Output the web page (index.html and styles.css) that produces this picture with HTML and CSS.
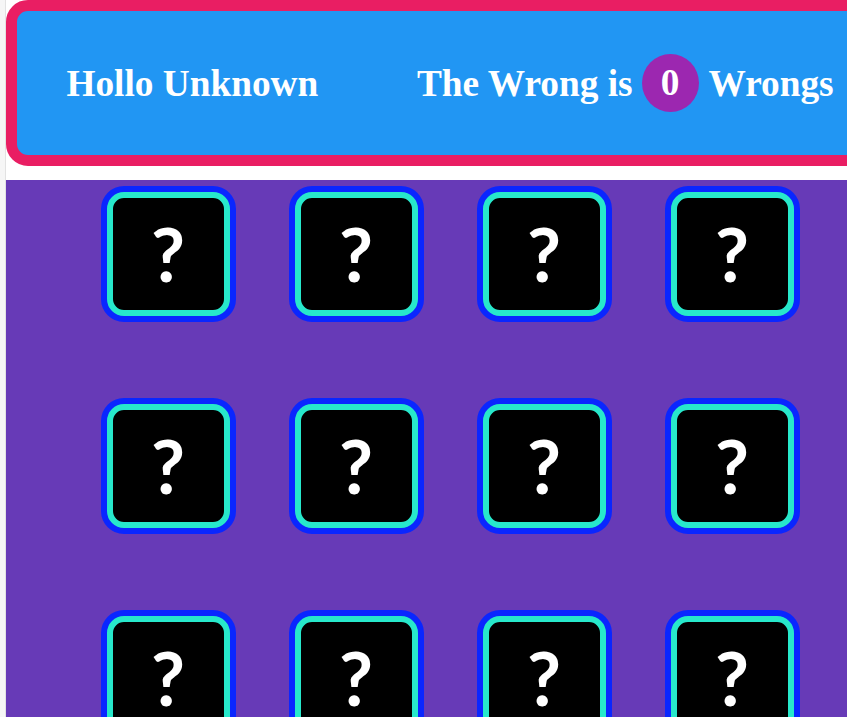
FILE: index.html
```html
<!DOCTYPE html>
<html>
<head>
<meta charset="utf-8">
<link rel="stylesheet" href="styles.css">
</head>
<body>
<div class="page">
  <header class="header">
    <span class="title">Hollo Unknown</span>
    <span class="title">The Wrong is <span class="count">0</span> Wrongs</span>
  </header>
  <main class="board">
    <div class="card"><div class="face">?</div></div>
    <div class="card"><div class="face">?</div></div>
    <div class="card"><div class="face">?</div></div>
    <div class="card"><div class="face">?</div></div>
    <div class="card"><div class="face">?</div></div>
    <div class="card"><div class="face">?</div></div>
    <div class="card"><div class="face">?</div></div>
    <div class="card"><div class="face">?</div></div>
    <div class="card"><div class="face">?</div></div>
    <div class="card"><div class="face">?</div></div>
    <div class="card"><div class="face">?</div></div>
    <div class="card"><div class="face">?</div></div>
  </main>
</div>
</body>
</html>
```

FILE: styles.css
```css
html, body {
  margin: 0;
  padding: 0;
  overflow: hidden;
  background: #f6f6f6;
  height: 100%;
}

.page {
  margin-left: 5px;
  border-left: 1px solid #e2e2e2;
  background: #ffffff;
  width: 888px;
  min-height: 100%;
}

.header {
  box-sizing: border-box;
  height: 166px;
  border: 11px solid #e91e63;
  border-radius: 22px;
  background: #2196f3;
  display: flex;
  justify-content: space-around;
  align-items: center;
  font-family: "Liberation Serif", "Times New Roman", serif;
  font-weight: bold;
  font-size: 37.3px;
  color: #ffffff;
}

.title {
  white-space: nowrap;
  display: flex;
  align-items: center;
}

.count {
  display: inline-block;
  width: 57px;
  height: 58px;
  line-height: 58px;
  border-radius: 50%;
  background: #9c27b0;
  text-align: center;
  margin: 0 10px 0 9px;
}

.board {
  margin-top: 14px;
  background: #673ab7;
  padding: 6px 0 80px;
  display: grid;
  grid-template-columns: repeat(4, 135px);
  grid-auto-rows: 136px;
  align-content: start;
  column-gap: 53px;
  row-gap: 76px;
  justify-content: center;
}

.card {
  box-sizing: border-box;
  width: 135px;
  height: 136px;
  border: 6px solid #0a26ff;
  border-radius: 23px;
  background: #0a26ff;
}

.face {
  box-sizing: border-box;
  height: 100%;
  border: 6px solid #27e8cb;
  border-radius: 17px;
  background: #000000;
  display: flex;
  align-items: center;
  justify-content: center;
  font-family: Lato, "Liberation Sans", Arial, sans-serif;
  font-weight: bold;
  font-size: 74px;
  line-height: 1;
  color: #ffffff;
}
```
